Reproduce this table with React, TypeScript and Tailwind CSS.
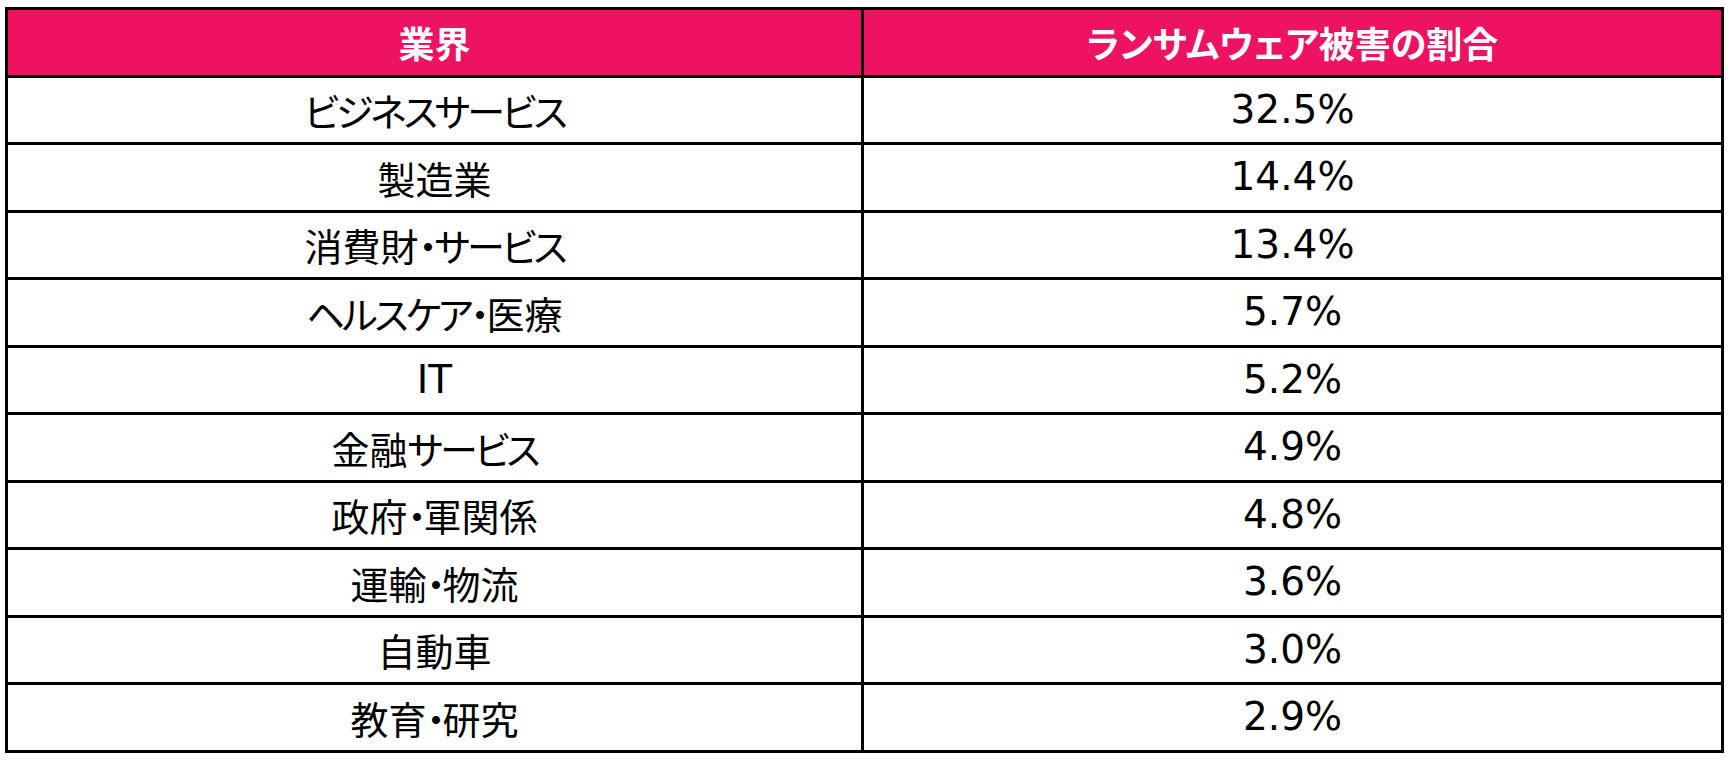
const rows: [string, string][] = [
  ["ビジネスサービス", "32.5%"],
  ["製造業", "14.4%"],
  ["消費財・サービス", "13.4%"],
  ["ヘルスケア・医療", "5.7%"],
  ["IT", "5.2%"],
  ["金融サービス", "4.9%"],
  ["政府・軍関係", "4.8%"],
  ["運輸・物流", "3.6%"],
  ["自動車", "3.0%"],
  ["教育・研究", "2.9%"],
];

const jp = "font-['Noto_Sans_CJK_JP',sans-serif] [font-feature-settings:'palt']";
const latin = "font-['DejaVu_Sans','Noto_Sans_CJK_JP',sans-serif]";

// kana in the source font is narrower than the kanji, so squeeze those runs a bit
function Label({ text }: { text: string }) {
  const parts = text.split(/([\u30A0-\u30FF]+)/).filter(Boolean);
  return (
    <span>
      {parts.map((p, i) =>
        /[\u30A0-\u30FF]/.test(p) ? (
          <span key={i} className="tracking-[-0.08em]">
            {p}
          </span>
        ) : (
          <span key={i}>{p}</span>
        )
      )}
    </span>
  );
}

export default function App() {
  return (
    <div className="w-[1734px] h-[760px] bg-white pt-[7px] pl-[5px]">
      <div className="w-[1719px] border-[3px] border-black">
        <div className="grid grid-cols-[856px_1fr] h-[64.5px] bg-[#ed1262] text-white font-bold">
          <div className={`flex items-center justify-center border-r-[3px] border-black text-[36px] ${jp}`}>
            業界
          </div>
          <div className={`flex items-center justify-center text-[36px] ${jp}`}>
            ランサムウェア被害の割合
          </div>
        </div>
        {rows.map(([name, pct]) => (
          <div
            key={name}
            className="grid grid-cols-[856px_1fr] h-[67.5px] border-t-[3px] border-black text-black"
          >
            <div
              className={`flex items-center justify-center border-r-[3px] border-black ${
                name === "IT" ? `text-[39px] ${latin}` : `text-[38px] ${jp}`
              }`}
            >
              <Label text={name} />
            </div>
            <div className={`flex items-center justify-center text-[39px] ${latin}`}>{pct}</div>
          </div>
        ))}
      </div>
    </div>
  );
}
